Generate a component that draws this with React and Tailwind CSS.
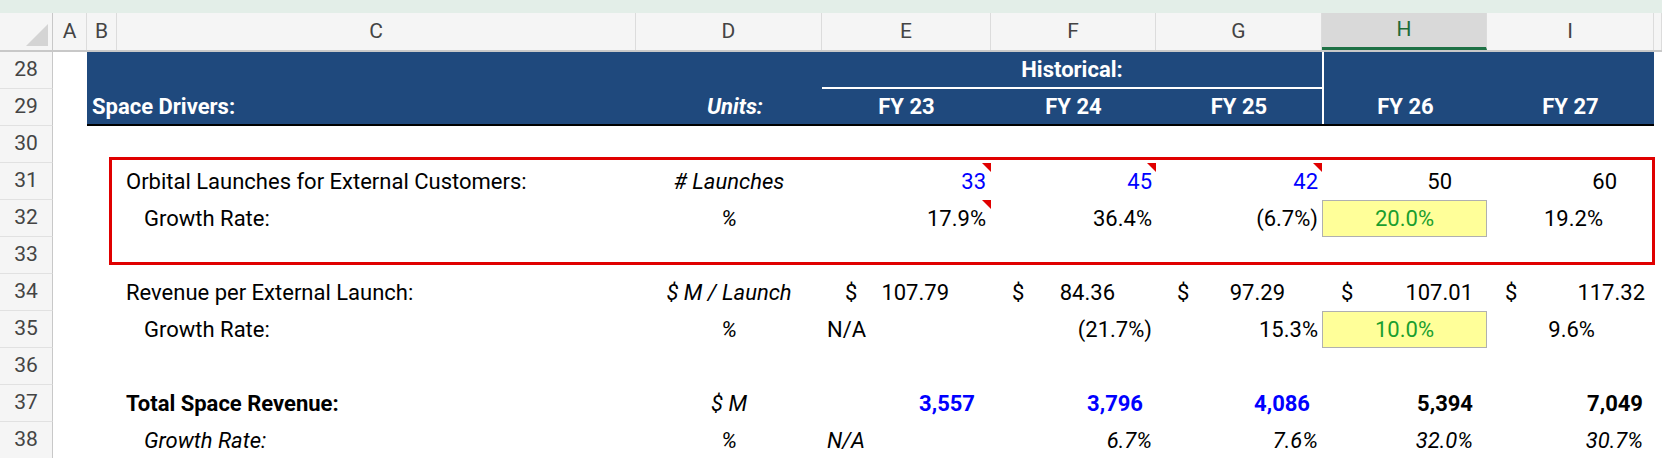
import React from "react";

const F = { fontFamily: "Roboto, 'Liberation Sans', sans-serif" };
const W = ["w-[53px]", "w-[34px]", "w-[30px]", "w-[519px]", "w-[186px]", "w-[169px]", "w-[165px]", "w-[166px]", "w-[165px]", "w-[167px]", "w-[8px]"];

function Tri() {
  return <span className="absolute top-0 right-0 w-0 h-0 border-t-[9px] border-t-[#e00000] border-l-[9px] border-l-transparent" />;
}

function Cell({ w, className = "", children, tri }) {
  return (
    <div className={`relative shrink-0 h-full flex items-center ${w} ${className}`}>
      {tri && <Tri />}
      {children}
    </div>
  );
}

function RowNum({ n }) {
  return (
    <div className="w-[53px] shrink-0 h-full flex items-center justify-center bg-[#f5f5f5] border-r border-[#c8c8c8] border-b border-b-[#e1e1e1] text-[#444] text-[21px]">
      {n}
    </div>
  );
}

function Row({ n, children }) {
  return (
    <div className="flex h-[37px] text-[22px] text-black">
      <RowNum n={n} />
      {children}
    </div>
  );
}

function Money({ w, pl, pr, v, bold }) {
  return (
    <Cell w={w}>
      <span className={pl}>$</span>
      <span className={`ml-auto ${pr}`}>{v}</span>
    </Cell>
  );
}

export default function App() {
  return (
    <div style={F} className="w-[1662px] h-[458px] overflow-hidden bg-white select-none">
      <div className="h-[13px] bg-[#e3eee8]" />
      <div className="flex h-[39px] bg-[#f5f5f5] border-b-2 border-[#c8c8c8] text-[#444] text-[21px]">
        <div className="w-[53px] shrink-0 relative border-r border-[#c8c8c8]">
          <span className="absolute right-[4px] bottom-[4px] w-0 h-0 border-b-[22px] border-b-[#d4d4d4] border-l-[22px] border-l-transparent" />
        </div>
        {["A", "B", "C", "D", "E", "F", "G", "H", "I", ""].map((l, i) => (
          <div
            key={i}
            className={`${W[i + 1]} shrink-0 flex items-center justify-center border-r border-[#dcdcdc] ${l === "H" ? "bg-[#d9d9d9] text-[#1e6b38] border-b-[3px] border-b-[#1e7145]" : ""}`}
          >
            {l}
          </div>
        ))}
      </div>

      {/* Row 28 */}
      <Row n={28}>
        <Cell w={W[1]} />
        <div className="flex h-full bg-[#1f497d] text-white font-bold">
          <Cell w="w-[735px]" />
          <Cell w="w-[500px]" className="justify-center border-b-2 border-white">Historical:</Cell>
          <Cell w="w-[332px]" className="border-l-2 border-white" />
        </div>
      </Row>
      {/* Row 29 */}
      <Row n={29}>
        <Cell w={W[1]} />
        <div className="flex h-full bg-[#1f497d] text-white font-bold border-b-2 border-black">
          <Cell w="w-[549px]" className="pl-[5px]">Space Drivers:</Cell>
          <Cell w={W[4]} className="justify-end pr-[59px] italic">Units:</Cell>
          <Cell w={W[5]} className="justify-center">FY 23</Cell>
          <Cell w={W[6]} className="justify-center">FY 24</Cell>
          <Cell w={W[7]} className="justify-center">FY 25</Cell>
          <Cell w={W[8]} className="justify-center border-l-2 border-white">FY 26</Cell>
          <Cell w={W[9]} className="justify-center">FY 27</Cell>
        </div>
      </Row>
      <Row n={30} />

      <div className="relative">
        <div className="absolute left-[109px] top-[-6px] w-[1546px] h-[108px] border-[3px] border-[#e00000] pointer-events-none z-10" />
        <Row n={31}>
          <Cell w={W[1]} /><Cell w={W[2]} />
          <Cell w={W[3]} className="pl-[9px]">Orbital Launches for External Customers:</Cell>
          <Cell w={W[4]} className="justify-center italic">
            # Launches
          </Cell>
          <Cell w={W[5]} className="justify-end pr-[5px] text-[#0000ff]" tri>33</Cell>
          <Cell w={W[6]} className="justify-end pr-[4px] text-[#0000ff]" tri>45</Cell>
          <Cell w={W[7]} className="justify-end pr-[4px] text-[#0000ff]" tri>42</Cell>
          <Cell w={W[8]} className="justify-end pr-[35px]">50</Cell>
          <Cell w={W[9]} className="justify-end pr-[37px]">60</Cell>
        </Row>
        <Row n={32}>
          <Cell w={W[1]} /><Cell w={W[2]} />
          <Cell w={W[3]} className="pl-[27px]">Growth Rate:</Cell>
          <Cell w={W[4]} className="justify-center italic">%</Cell>
          <Cell w={W[5]} className="justify-end pr-[5px]" tri>17.9%</Cell>
          <Cell w={W[6]} className="justify-end pr-[4px]">36.4%</Cell>
          <Cell w={W[7]} className="justify-end pr-[4px]">(6.7%)</Cell>
          <Cell w={W[8]} className="justify-center bg-[#ffff99] border border-[#b0b0b0] text-[#1a9e2e]">20.0%</Cell>
          <Cell w={W[9]} className="justify-end pr-[51px]">19.2%</Cell>
        </Row>
      </div>
      <Row n={33} />
      <Row n={34}>
        <Cell w={W[1]} /><Cell w={W[2]} />
        <Cell w={W[3]} className="pl-[9px]">Revenue per External Launch:</Cell>
        <Cell w={W[4]} className="justify-center italic">$ M / Launch</Cell>
        <Money w={W[5]} pl="pl-[23px]" pr="pr-[42px]" v="107.79" />
        <Money w={W[6]} pl="pl-[21px]" pr="pr-[41px]" v="84.36" />
        <Money w={W[7]} pl="pl-[21px]" pr="pr-[37px]" v="97.29" />
        <Money w={W[8]} pl="pl-[19px]" pr="pr-[14px]" v="107.01" />
        <Money w={W[9]} pl="pl-[18px]" pr="pr-[9px]" v="117.32" />
      </Row>
      <Row n={35}>
        <Cell w={W[1]} /><Cell w={W[2]} />
        <Cell w={W[3]} className="pl-[27px]">Growth Rate:</Cell>
        <Cell w={W[4]} className="justify-center italic">%</Cell>
        <Cell w={W[5]} className="pl-[5px]">N/A</Cell>
        <Cell w={W[6]} className="justify-end pr-[4px]">(21.7%)</Cell>
        <Cell w={W[7]} className="justify-end pr-[4px]">15.3%</Cell>
        <Cell w={W[8]} className="justify-center bg-[#ffff99] border border-[#b0b0b0] text-[#1a9e2e]">10.0%</Cell>
        <Cell w={W[9]} className="justify-end pr-[59px]">9.6%</Cell>
      </Row>
      <Row n={36} />
      <Row n={37}>
        <Cell w={W[1]} /><Cell w={W[2]} />
        <Cell w={W[3]} className="pl-[9px] font-bold">Total Space Revenue:</Cell>
        <Cell w={W[4]} className="justify-center italic">$ M</Cell>
        <Cell w={W[5]} className="justify-end pr-[16px] font-bold text-[#0000ff]">3,557</Cell>
        <Cell w={W[6]} className="justify-end pr-[13px] font-bold text-[#0000ff]">3,796</Cell>
        <Cell w={W[7]} className="justify-end pr-[12px] font-bold text-[#0000ff]">4,086</Cell>
        <Cell w={W[8]} className="justify-end pr-[14px] font-bold">5,394</Cell>
        <Cell w={W[9]} className="justify-end pr-[11px] font-bold">7,049</Cell>
      </Row>
      <Row n={38}>
        <Cell w={W[1]} /><Cell w={W[2]} />
        <Cell w={W[3]} className="pl-[27px] italic">Growth Rate:</Cell>
        <Cell w={W[4]} className="justify-center italic">%</Cell>
        <Cell w={W[5]} className="pl-[5px] italic">N/A</Cell>
        <Cell w={W[6]} className="justify-end pr-[4px] italic">6.7%</Cell>
        <Cell w={W[7]} className="justify-end pr-[4px] italic">7.6%</Cell>
        <Cell w={W[8]} className="justify-end pr-[14px] italic">32.0%</Cell>
        <Cell w={W[9]} className="justify-end pr-[11px] italic">30.7%</Cell>
      </Row>
    </div>
  );
}
